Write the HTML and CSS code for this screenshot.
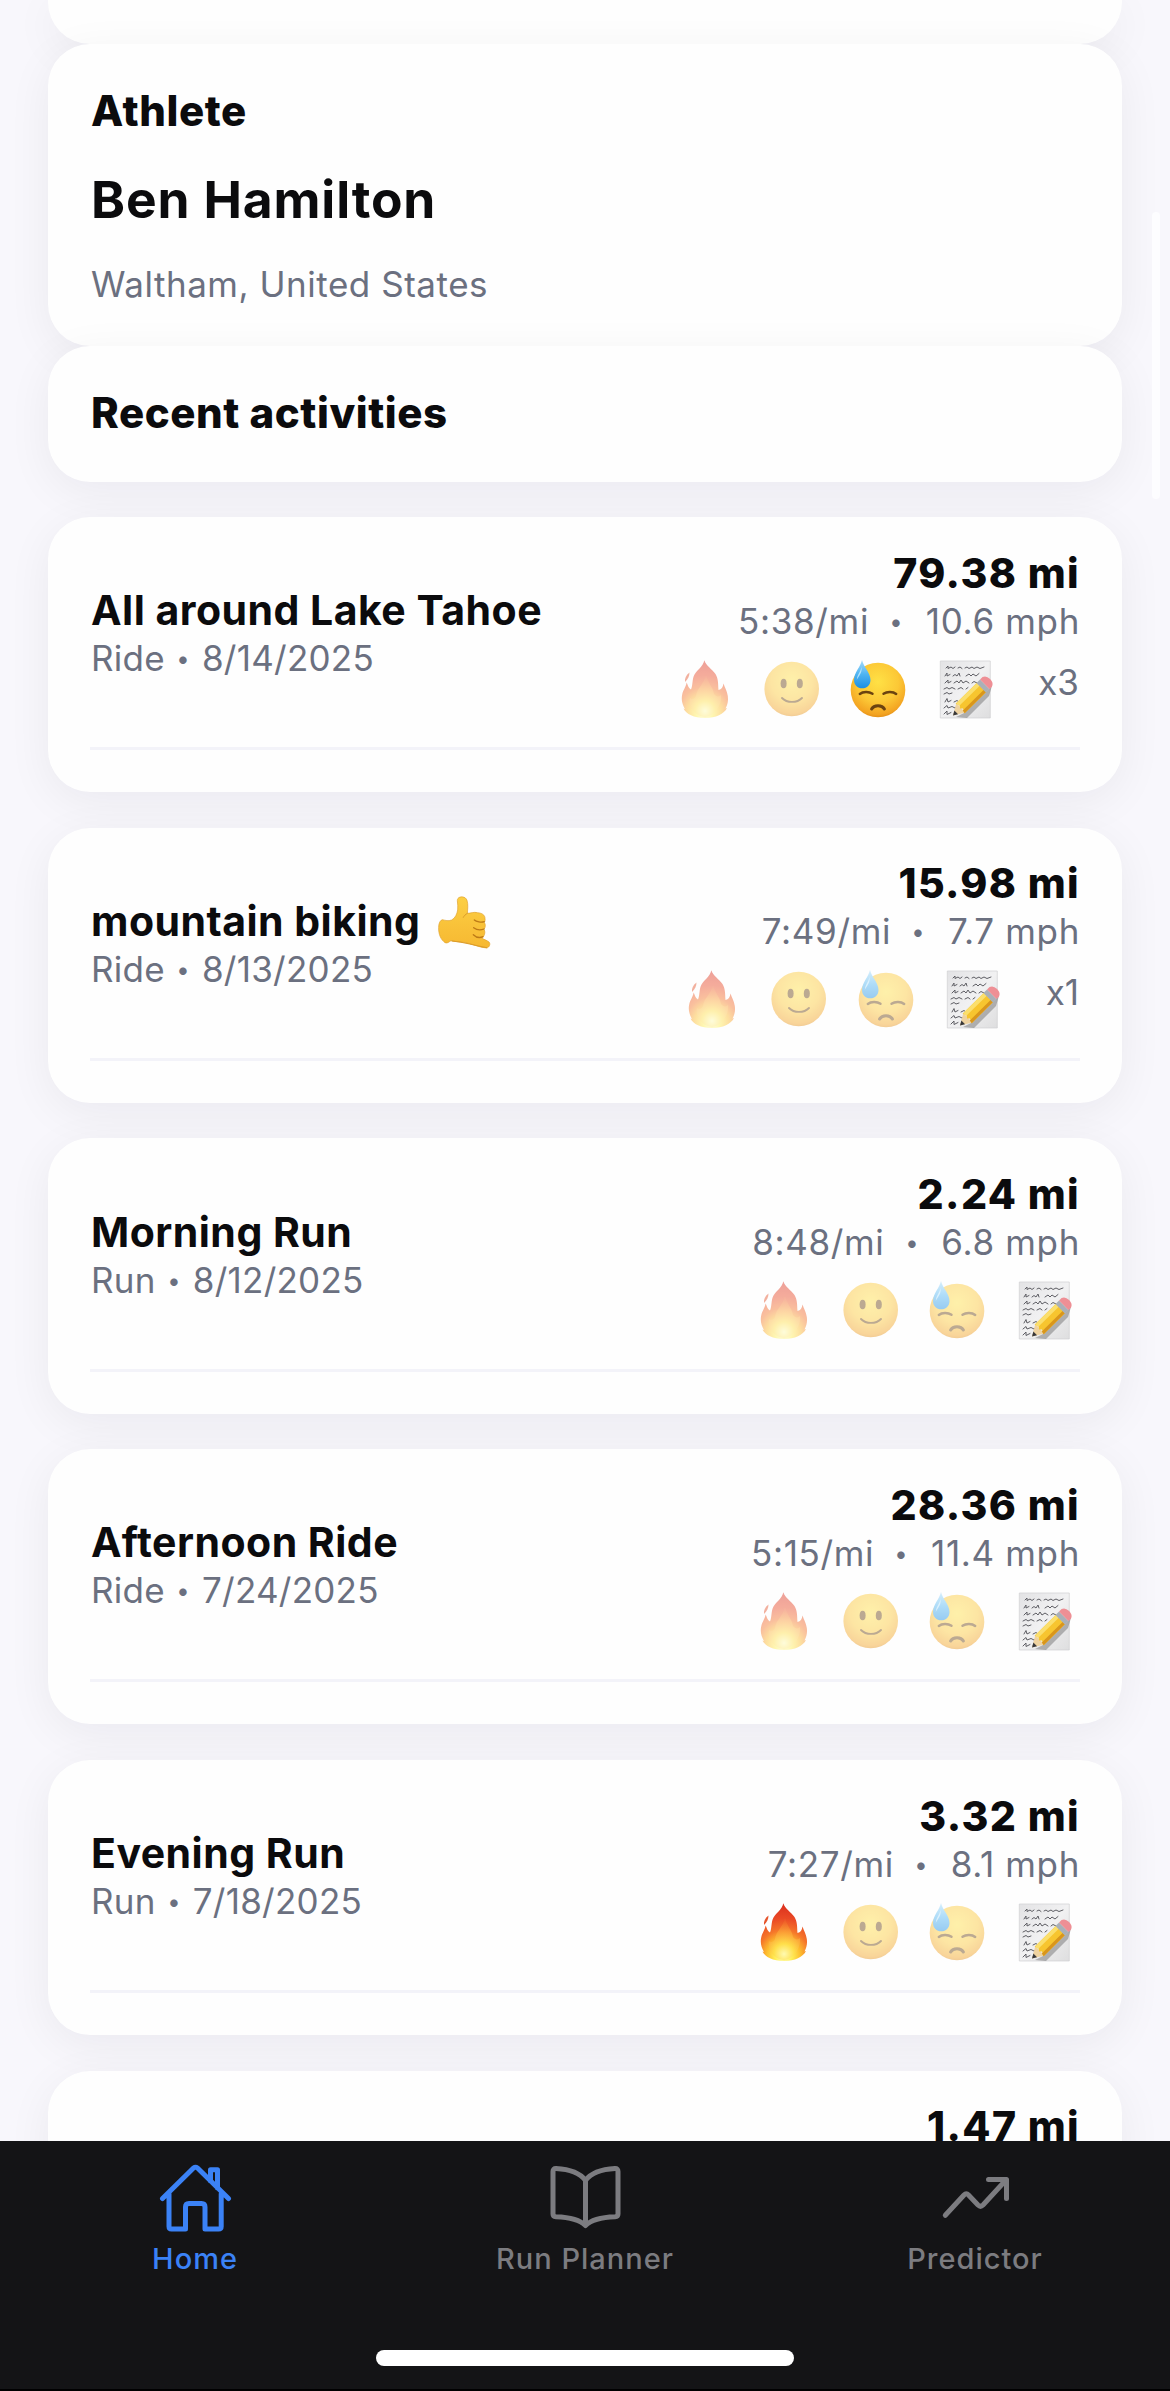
FILE: index.html
```html
<!DOCTYPE html>
<html lang="en">
<head>
<meta charset="utf-8">
<title>Home</title>
<link rel="stylesheet" href="styles.css">
</head>
<body>
<svg class="defs" aria-hidden="true">
  <defs>
    <radialGradient id="flame" gradientUnits="userSpaceOnUse" cx="29.5" cy="54" r="50">
      <stop offset="0" stop-color="#fffbd0"/><stop offset=".16" stop-color="#fff15a"/><stop offset=".34" stop-color="#fdbd2e"/><stop offset=".52" stop-color="#f5762a"/><stop offset=".75" stop-color="#ea4a25"/><stop offset="1" stop-color="#dd3320"/>
    </radialGradient>
    <radialGradient id="tongue" gradientUnits="userSpaceOnUse" cx="30" cy="52" r="34">
      <stop offset="0" stop-color="#fffab0"/><stop offset=".3" stop-color="#ffdf4a"/><stop offset=".65" stop-color="#fb9d35"/><stop offset="1" stop-color="#f06a2b" stop-opacity=".3"/>
    </radialGradient>
    <radialGradient id="face" cx=".5" cy=".35" r=".68">
      <stop offset="0" stop-color="#ffe145"/><stop offset=".55" stop-color="#fcc836"/><stop offset=".88" stop-color="#f3a321"/><stop offset="1" stop-color="#dc8712"/>
    </radialGradient>
    <linearGradient id="drop" x1="0" y1="0" x2="0" y2="1">
      <stop offset="0" stop-color="#a5dcfb"/><stop offset=".5" stop-color="#4fb4f2"/><stop offset="1" stop-color="#1c8fe3"/>
    </linearGradient>
    <linearGradient id="paper" x1="0" y1="0" x2="1" y2="1">
      <stop offset="0" stop-color="#e3e3e5"/><stop offset=".5" stop-color="#f1f1f2"/><stop offset="1" stop-color="#dededf"/>
    </linearGradient>
    <linearGradient id="skin" x1="0" y1="0" x2="0" y2="1">
      <stop offset="0" stop-color="#fccf43"/><stop offset="1" stop-color="#f6b832"/>
    </linearGradient>
    <symbol id="fire" viewBox="0 0 60 60">
      <path fill="url(#flame)" d="M29.3 1.3C31 7 37 10 40.500 15C43.500 20 43 25 43.500 31C46.500 30.500 48 28 48.500 24.500C50 29 52 32 52.800 37C53.500 42 52.500 46 50.500 49.500L52 49C49 55 41 59 30 59C19 59 11 55 8.500 49.500L10 50C7.500 46 6 41 7.200 35.500C8 31 10.500 29 11.700 23.500C13 27 13.500 29 16 30.500C18 26 17 20 19.500 15.500C22.500 10.500 28 8 29.300 1.300Z"/>
      <path fill="url(#tongue)" d="M31 16C33 24 38 28 39 35C41 38 44 38 46 36C47 46 40 57 30 58C20 57 13 48 15 39C17 41 20 40 21 37C22 29 29 25 31 16Z"/>
      <path fill="#e5542c" d="M14.500 13.500C14.500 17 13 20 10 23C9.500 19.500 11 16 14.500 13.500Z"/>
    </symbol>
    <symbol id="smile" viewBox="0 0 60 60">
      <circle cx="29.700" cy="30" r="27.300" fill="url(#face)"/>
      <g fill="#6b4310"><ellipse cx="21.600" cy="24.500" rx="3" ry="4.700"/><ellipse cx="37.800" cy="24.500" rx="3" ry="4.700"/></g>
      <path fill="none" stroke="#6b4310" stroke-width="1.900" stroke-linecap="round" d="M20 39C25 44.200 35 44.200 40 39"/>
    </symbol>
    <symbol id="sweat" viewBox="0 0 60 60">
      <circle cx="30" cy="31" r="27.300" fill="url(#face)"/>
      <path fill="url(#drop)" d="M14 1C15.500 8 22.500 13.500 22.500 21C22.500 26 19 29.300 14.300 29.300C9.500 29.300 6 26 6 21C6 13.500 12.500 8 14 1Z"/>
      <path fill="#c9ecfd" opacity=".8" d="M13.500 8C12.500 13 9 16 8.800 21C10.500 17 14.500 14 13.500 8Z"/>
      <g fill="none" stroke="#6b4310" stroke-linecap="round"><path stroke-width="2.400" d="M11.800 35C15 32.300 21 32.300 24.500 34.800M35.500 34.800C39 32.300 45 32.300 48.200 35"/><path stroke-width="3" d="M23.600 50C26 45.600 34 45.600 36.400 50"/></g>
    </symbol>
    <symbol id="memo" viewBox="0 0 60 60">
      <path fill="url(#paper)" stroke="#d0d0d3" stroke-width=".7" d="M5.300 2H55.300V59H5.300Z"/>
      <g fill="none" stroke="#5e5e64" stroke-width="1" stroke-linecap="round" stroke-linejoin="round">
        <path d="M11 9L13 7L13 9.500L16 8L18 9.500L20 8M23 9L25 8L27 9.500M30 9L32 8L34 9.500L37 8L39 9.500L42 8L45 9.500L49 8"/>
        <path d="M10 17L12 14L12 17L15 15.500M18 17L20 15.500L22 17L24 14L25 17M31 17L34 15L36 17L38 15L41 17L44 14.500"/>
        <path d="M10 24L13 21L13 24L16 22.500M19 24L22 22L24 24L26 21L28 24L31 22L34 24M37 24L39 22.500L42 24"/>
        <path d="M9 30L12 28.500L14 30L17 28.500L20 30M23 30L26 28.500L28 30M31 30L33 28.500"/>
        <path d="M9 35L12 33.500L14 35L17 34"/>
        <path d="M10 43L12 39.500L13 43L16 41.500M19 43L22 41.500L24 43L27 41.500"/>
        <path d="M9 49L12 46.500L13 49L17 47.500L20 49L23 46"/>
        <path d="M9 55L12 52L12 55.500L16 53.500M19 54L20 53"/>
      </g>
      <path fill="#000" opacity=".25" d="M21 58L29 54L57 27L54 37L32 59Z"/>
      <g transform="translate(18 56.500) rotate(-44.500)">
        <path fill="#efd3a0" d="M0 0L11 -6.500V6.500Z"/>
        <path fill="#38383a" d="M0 0L4.500 -2.600V2.600Z"/>
        <path fill="#f7c52f" d="M10 -6.500H40V6.500H10L12 2L10 0L12 -3Z"/>
        <path fill="#fbdf6d" d="M11 -6.500H40V-2.500H11Z"/>
        <path fill="#d9961c" d="M10.500 3.300H40V6.500H10Z"/>
        <path fill="#a9b0b8" d="M39.500 -6.700H44.500V6.700H39.500Z"/>
        <path fill="#ee8f95" d="M44.500 -6.700H48Q52 -5.500 52 0T48 6.700H44.500Z"/>
      </g>
    </symbol>
    <symbol id="shaka" viewBox="105 100 165 165">
      <path fill="url(#skin)" stroke="#e0a02a" stroke-width="2" stroke-linejoin="round" d="M166 120C165 106 190 104 195 119C199 132 197 145 196 158C207 158 215 153 226 156C240 157 249 163 249 173C250 178 249 182 247 185C251 191 251 200 246 206C250 212 249 220 245 227L240 233C248 237 256 240 261 244C266 249 263 260 254 262C236 261 215 252 192 246C178 244 160 243 147 240C140 244 137 249 129 246C117 237 109 222 110 200C110 188 114 179 121 177C130 179 139 182 149 178C160 172 165 160 167 148C168 138 167 130 166 120Z"/>
      <path fill="none" stroke="#bd7a17" stroke-width="4" stroke-linecap="round" d="M217 178C223 184 238 186 247 183M215 201C224 208 236 209 246 205M214 222C222 230 234 232 243 228"/>
      <path fill="none" stroke="#dc9c29" stroke-width="3" stroke-linecap="round" d="M196 158C190 162 186 165 184 170M150 241C180 243 225 256 254 261"/>
    </symbol>
  </defs>
</svg>

<main class="feed">
  <section class="card card-cut"></section>
  <section class="card athlete">
    <h2 class="heading">Athlete</h2>
    <p class="name">Ben Hamilton</p>
    <p class="place">Waltham, United States</p>
  </section>
  <section class="card recent"><h2 class="heading">Recent activities</h2></section>

  <div class="activities">
    <article class="card activity">
      <div class="row">
        <div class="info"><h3 class="title">All around Lake Tahoe</h3><p class="meta">Ride <span class="dot">•</span> 8/14/2025</p></div>
        <div class="stats"><p class="distance">79.38 mi</p><p class="pace">5:38/mi&nbsp; <span class="dot">•</span>&nbsp; 10.6 mph</p>
          <div class="moods"><svg class="mood dim"><use href="#fire"/></svg><svg class="mood dim"><use href="#smile"/></svg><svg class="mood"><use href="#sweat"/></svg><svg class="mood"><use href="#memo"/></svg><span class="count">x3</span></div></div>
      </div>
    </article>
    <article class="card activity">
      <div class="row">
        <div class="info"><h3 class="title">mountain biking <svg class="shaka"><use href="#shaka"/></svg></h3><p class="meta">Ride <span class="dot">•</span> 8/13/2025</p></div>
        <div class="stats"><p class="distance">15.98 mi</p><p class="pace">7:49/mi&nbsp; <span class="dot">•</span>&nbsp; 7.7 mph</p>
          <div class="moods"><svg class="mood dim"><use href="#fire"/></svg><svg class="mood dim"><use href="#smile"/></svg><svg class="mood dim"><use href="#sweat"/></svg><svg class="mood"><use href="#memo"/></svg><span class="count">x1</span></div></div>
      </div>
    </article>
    <article class="card activity">
      <div class="row">
        <div class="info"><h3 class="title">Morning Run</h3><p class="meta">Run <span class="dot">•</span> 8/12/2025</p></div>
        <div class="stats"><p class="distance">2.24 mi</p><p class="pace">8:48/mi&nbsp; <span class="dot">•</span>&nbsp; 6.8 mph</p>
          <div class="moods"><svg class="mood dim"><use href="#fire"/></svg><svg class="mood dim"><use href="#smile"/></svg><svg class="mood dim"><use href="#sweat"/></svg><svg class="mood"><use href="#memo"/></svg></div></div>
      </div>
    </article>
    <article class="card activity">
      <div class="row">
        <div class="info"><h3 class="title">Afternoon Ride</h3><p class="meta">Ride <span class="dot">•</span> 7/24/2025</p></div>
        <div class="stats"><p class="distance">28.36 mi</p><p class="pace">5:15/mi&nbsp; <span class="dot">•</span>&nbsp; 11.4 mph</p>
          <div class="moods"><svg class="mood dim"><use href="#fire"/></svg><svg class="mood dim"><use href="#smile"/></svg><svg class="mood dim"><use href="#sweat"/></svg><svg class="mood"><use href="#memo"/></svg></div></div>
      </div>
    </article>
    <article class="card activity">
      <div class="row">
        <div class="info"><h3 class="title">Evening Run</h3><p class="meta">Run <span class="dot">•</span> 7/18/2025</p></div>
        <div class="stats"><p class="distance">3.32 mi</p><p class="pace">7:27/mi&nbsp; <span class="dot">•</span>&nbsp; 8.1 mph</p>
          <div class="moods"><svg class="mood"><use href="#fire"/></svg><svg class="mood dim"><use href="#smile"/></svg><svg class="mood dim"><use href="#sweat"/></svg><svg class="mood"><use href="#memo"/></svg></div></div>
      </div>
    </article>
    <article class="card activity">
      <div class="row">
        <div class="stats"><p class="distance">1.47 mi</p></div>
      </div>
    </article>
  </div>
</main>
<div class="scrollbar"></div>

<nav class="tabs">
  <div class="tab-row">
    <a class="tab active">
      <svg class="tab-icon" viewBox="0 0 74 70"><path d="M4.500 34.500L35.500 4Q37.500 2.600 39.500 4L70.500 34.500M11 30V62.500Q11 65 13.500 65H27.500V43Q27.500 39.500 31 39.500H43.500Q47 39.500 47 43V65H60.500Q63.200 65 63.200 62.500V30M52.500 17V5.700H59.500V24"/></svg>
      <span>Home</span>
    </a>
    <a class="tab">
      <svg class="tab-icon" viewBox="0 0 74 70"><path d="M37.500 16.500C31.500 8.500 20.500 5.300 8 4.600Q5 4.500 5 7.500V50Q5 52.600 8 52.800C20.500 53.300 31.500 55.500 37.500 61.500C43.500 55.500 54.500 53.300 67 52.800Q70 52.600 70 50V7.500Q70 4.500 67 4.600C54.500 5.300 43.500 8.500 37.500 16.500ZM37.500 16.500V59"/></svg>
      <span>Run Planner</span>
    </a>
    <a class="tab">
      <svg class="tab-icon" viewBox="0 0 74 70"><path d="M7.300 51.300L26 31Q28.300 28.700 30.500 31L40 41Q42.500 43.500 45 41L67.500 16.500M50.500 15.500H68.500V34.500"/></svg>
      <span>Predictor</span>
    </a>
  </div>
  <div class="home-indicator"></div>
</nav>
</body>
</html>
```
FILE: styles.css
```css
* { box-sizing: border-box; margin: 0; padding: 0; }
body {
  position: relative;
  display: flex;
  flex-direction: column;
  width: 1170px;
  height: 2391px;
  overflow: hidden;
  background: #f8f7fc;
  color: #0b0b0d;
  font-family: Inter, "Liberation Sans", sans-serif;
}
.defs { position: absolute; width: 0; height: 0; }

.feed { flex: 1; min-height: 0; overflow: hidden; padding: 0 48px; }
.card {
  border-radius: 42px;
  background: #fefefe;
  box-shadow: 0 10px 46px rgba(20, 10, 30, .06);
}
.card-cut { height: 44px; border-radius: 0 0 42px 42px; }
.athlete { padding: 42px 42px 41.500px 43px; }
.recent { padding: 42px 42px 43.500px 43px; }
.heading { font-size: 42px; line-height: 50px; font-weight: 800; letter-spacing: .550px; }
.name { margin-top: 32px; font-size: 51.500px; line-height: 62px; font-weight: 700; letter-spacing: .850px; }
.place { margin-top: 32.500px; font-size: 35px; line-height: 42px; letter-spacing: .530px; color: #6b7080; }

.activities { display: flex; flex-direction: column; gap: 35.400px; margin-top: 35.400px; }
.activity { height: 275.350px; padding: 31.800px 42px 0; }
.row {
  display: flex;
  align-items: center;
  justify-content: space-between;
  padding-bottom: 27.500px;
  border-bottom: 3px solid #f3f3f9;
}
.info { margin-left: 1px; }
.title { font-size: 41px; line-height: 48px; font-weight: 700; letter-spacing: .480px; white-space: nowrap; }
.shaka { width: 55px; height: 55px; margin: -8px 0 -8px 6px; vertical-align: -5px; }
.meta, .pace, .count { font-size: 35px; line-height: 48px; letter-spacing: .250px; color: #6b7080; white-space: nowrap; }
.pace { letter-spacing: .650px; }
.dot { display: inline-block; margin: 0 -1.500px; transform: scale(.68); }
.pace .dot { margin: 0 -1.500px 0 -4px; }
.stats { display: flex; flex-direction: column; align-items: flex-end; margin-left: auto; }
.distance { font-size: 41px; line-height: 48px; font-weight: 800; letter-spacing: 1.350px; }
.moods { display: flex; align-items: center; gap: 26.700px; height: 60px; margin: 14px 6px 1px 0; }
.mood { width: 60px; height: 60px; }
.dim { opacity: .45; }
.count { margin: -14px -5px 0 16.500px; letter-spacing: 0; }

.scrollbar { position: absolute; left: 1152px; top: 212px; width: 8px; height: 287px; border-radius: 4px; background: #fdfdff; }

.tabs {
  display: flex;
  flex-direction: column;
  justify-content: space-between;
  align-items: center;
  height: 250px;
  padding: 23px 0 23px;
  border-bottom: 2px solid #000;
  background: #141416;
}
.tab-row { display: flex; width: 100%; }
.tab { flex: 1; display: flex; flex-direction: column; align-items: center; gap: 7px; color: #7c7c80; font-size: 29px; line-height: 36px; font-weight: 500; letter-spacing: 1px; }
.tab-icon { width: 74px; height: 70px; fill: none; stroke: currentColor; stroke-width: 5; stroke-linecap: round; stroke-linejoin: round; }
.active { color: #3b82f6; }
.home-indicator { width: 418px; height: 16px; border-radius: 8px; background: #fff; }
```
